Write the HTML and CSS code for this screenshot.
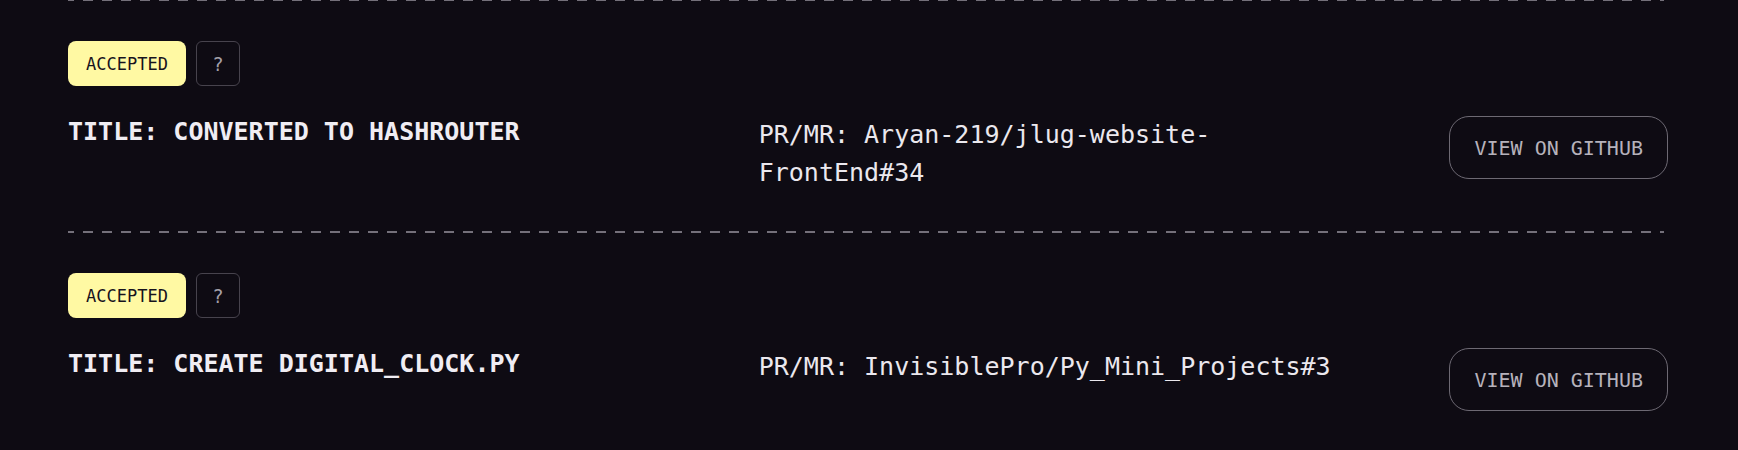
FILE: index.html
```html
<!DOCTYPE html>
<html lang="en">
<head>
<meta charset="utf-8">
<title>Contributions</title>
<link rel="stylesheet" href="styles.css">
</head>
<body>
<div class="list">
  <div class="item">
    <div class="badges">
      <span class="badge">ACCEPTED</span>
      <span class="help">?</span>
    </div>
    <div class="main">
      <div class="title">Title: Converted to HashRouter</div>
      <div class="pr">PR/MR: Aryan-219/jlug-website-FrontEnd#34</div>
      <a class="btn">VIEW ON GITHUB</a>
    </div>
  </div>
  <div class="item">
    <div class="badges">
      <span class="badge">ACCEPTED</span>
      <span class="help">?</span>
    </div>
    <div class="main">
      <div class="title">Title: Create digital_clock.py</div>
      <div class="pr">PR/MR: InvisiblePro/Py_Mini_Projects#3</div>
      <a class="btn">VIEW ON GITHUB</a>
    </div>
  </div>
</div>
</body>
</html>
```
FILE: styles.css
```css
html, body {
  margin: 0;
  padding: 0;
  background: #0e0b13;
  overflow: hidden;
}
body {
  font-family: "DejaVu Sans Mono", "Liberation Mono", monospace;
  color: #ece9f0;
}
.list {
  max-width: 1600px;
  margin: -1px auto 0;
  padding-right: 2px;
}
.item {
  padding: 42px 0 40px;
  background-image: repeating-linear-gradient(90deg, #74707a 0 10px, transparent 10px 19px);
  background-size: 100% 2px;
  background-position: -4px 0;
  background-repeat: no-repeat;
}
.badges {
  display: flex;
  gap: 10px;
  height: 45px;
}
.badge {
  display: flex;
  align-items: center;
  padding: 0 18px;
  background: #fff9a3;
  color: #17131d;
  border-radius: 8px;
  font-size: 17px;
}
.help {
  box-sizing: border-box;
  width: 44px;
  display: flex;
  align-items: center;
  justify-content: center;
  border: 1px solid #47434d;
  border-radius: 6px;
  color: #a39fa8;
  font-size: 19px;
}
.main {
  display: grid;
  grid-template-columns: 1fr 1fr auto;
  column-gap: 96px;
  align-items: start;
  margin-top: 30px;
}
.title {
  font-size: 25px;
  font-weight: 700;
  line-height: 32px;
  text-transform: uppercase;
  color: #f0edf3;
}
.pr {
  font-size: 25px;
  line-height: 37.5px;
  color: #ebe8ee;
  overflow-wrap: anywhere;
}
.btn {
  box-sizing: border-box;
  height: 63px;
  display: flex;
  align-items: center;
  padding: 0 24px;
  border: 1px solid #6d6973;
  border-radius: 20px;
  font-size: 20px;
  color: #b6b2bb;
  white-space: nowrap;
}
```
